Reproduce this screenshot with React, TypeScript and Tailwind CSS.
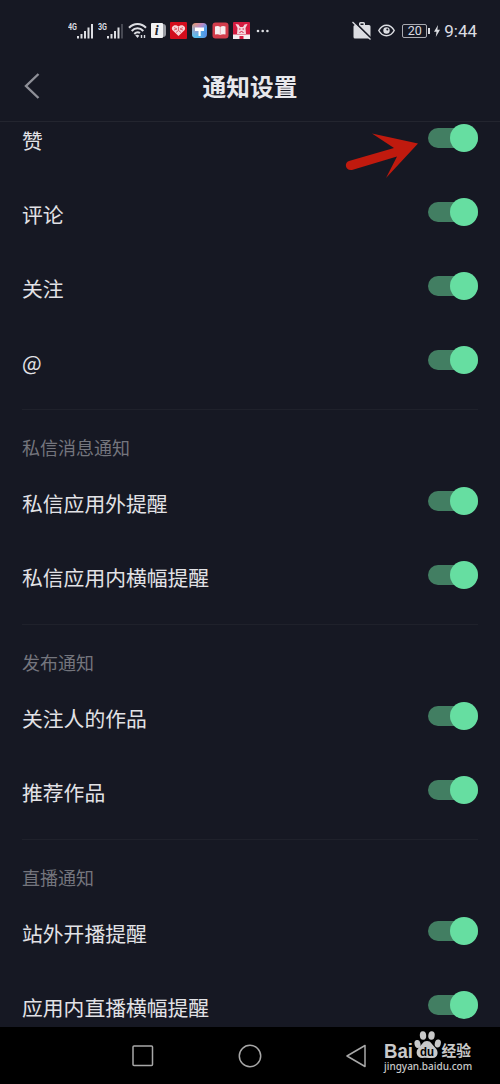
type Section = {
  title?: string;
  items: string[];
};

const sections: Section[] = [
  { items: ['赞', '评论', '关注', '@'] },
  { title: '私信消息通知', items: ['私信应用外提醒', '私信应用内横幅提醒'] },
  { title: '发布通知', items: ['关注人的作品', '推荐作品'] },
  { title: '直播通知', items: ['站外开播提醒', '应用内直播横幅提醒'] },
];

function Signal({ label, weak = false }: { label: string; weak?: boolean }) {
  return (
    <svg width="26" height="18" viewBox="0 0 26 18" fill="#dcdde2">
      <text x="0" y="8" fontSize="9.5" fontWeight="700" textLength="9" lengthAdjust="spacingAndGlyphs" fontFamily="Roboto, sans-serif">
        {label}
      </text>
      <rect x="9" y="14" width="2" height="2.5" />
      <rect x="12.5" y="12" width="2" height="4.5" />
      <rect x="16" y="9" width="2" height="7.5" />
      <rect x="19.5" y="5.5" width="2" height="11" />
      <rect x="23" y="2" width="2" height="14.5" opacity={weak ? 0.25 : 1} />
    </svg>
  );
}

function Wifi() {
  return (
    <svg width="19" height="17" viewBox="0 0 19 17" fill="none" stroke="#dcdde2" strokeWidth="2">
      <path d="M1 5.8C5.8.7 13.2.7 18 5.8" />
      <path d="M3.7 9C7.1 5.4 11.9 5.4 15.3 9" />
      <path d="M6.3 12C8.2 10 10.4 9.9 12 11" />
      <path d="M7.2 13.3 9.5 16l1.9-2.2c-1.2-1.2-2.9-1.3-4.2-.5Z" fill="#dcdde2" stroke="none" />
      <path d="M13.5 13v3M16.5 13v3" strokeWidth="1.4" />
    </svg>
  );
}

function NotificationIcons() {
  return (
    <div className="flex items-center gap-[4px]">
      <svg width="15" height="17" viewBox="0 0 15 17">
        <path d="M11 2h1a3 3 0 0 1 3 3v7a3 3 0 0 1-3 3h-1Z" fill="#999ba2" />
        <rect y="1" width="12" height="15" rx="1" fill="#f1f1f3" />
        <text x="3.7" y="13" fontSize="14" fontWeight="700" fontStyle="italic" fill="#22232b" fontFamily="Liberation Serif, serif">
          i
        </text>
      </svg>
      <svg width="17" height="17" viewBox="0 0 17 17">
        <rect width="17" height="17" rx="1" fill="#d30d1c" />
        <path d="M8.5 14 2.3 8C.5 4.8 4.7 1.3 8.5 4.6 12.3 1.3 16.5 4.8 14.7 8Z" fill="#f7d3d6" />
        <path d="m4 5.5 3 1.5-3 1m9-2.5L10 7l3 1M6 10.5l2.5-2 2.5 2M8.5 5v3.5" fill="none" stroke="#d84a56" strokeWidth=".8" />
      </svg>
      <svg width="17" height="17" viewBox="0 0 17 17">
        <defs>
          <linearGradient id="brush" x1="0" y1="0" x2="1" y2="1">
            <stop offset=".05" stopColor="#f3966a" />
            <stop offset=".4" stopColor="#b58ac9" />
            <stop offset=".65" stopColor="#4fa0ea" />
            <stop offset="1" stopColor="#5b7fe0" />
          </linearGradient>
          <linearGradient id="brushCorner" x1="0" y1="1" x2=".6" y2=".4">
            <stop stopColor="#56c8ee" />
            <stop offset="1" stopColor="#56c8ee" stopOpacity="0" />
          </linearGradient>
        </defs>
        <rect x="1" y="1" width="15" height="15" rx="4" fill="url(#brush)" />
        <rect x="1" y="1" width="15" height="15" rx="4" fill="url(#brushCorner)" />
        <path d="M4 5.5h9V9H9.7v5H7.5V9H4Z" fill="#fff" />
      </svg>
      <svg width="17" height="17" viewBox="0 0 17 17">
        <rect x=".5" y=".5" width="16" height="16" rx="3" fill="#d23c4b" />
        <path d="M3 4.5q3-1 5.3.4 2.2-1.4 5.2-.4v8q-3-.8-5.2.4Q6 11.7 3 12.5Z" fill="#f7eef0" />
        <path d="M8.3 5v7.5" stroke="#e08a93" strokeWidth=".6" />
      </svg>
      <svg width="17" height="17" viewBox="0 0 17 17">
        <rect width="17" height="17" rx="1" fill="#d41c40" />
        <path d="m2.5 2 3 .5L7 5h3l1.5-2.5 3-.5-2 4 .5 6H4l.5-6Z" fill="#f5d5dc" />
        <path d="M6 7h1.5M9.500 7H11M6.500 11l2-2 2 2" fill="none" stroke="#d41c40" />
        <path d="M0 12.500h17V17H0Z" fill="#f5edf0" />
        <path d="M6.500 17v-3h4v3Z" fill="#d41c40" />
      </svg>
    </div>
  );
}

function StatusBar() {
  return (
    <div className="flex h-[61px] items-center pr-[23px] pl-[68px]">
      <div className="flex items-center gap-[4px]">
        <Signal label="4G" />
        <Signal label="3G" weak />
        <Wifi />
        <NotificationIcons />
        <svg width="14" height="4" viewBox="0 0 14 4" fill="#dcdde2" className="ml-[2px]">
          <circle cx="2" cy="2" r="1.3" />
          <circle cx="6.7" cy="2" r="1.3" />
          <circle cx="11.4" cy="2" r="1.3" />
        </svg>
      </div>
      <div className="ml-auto flex items-center">
        <svg width="20" height="19" viewBox="0 0 20 19">
          <path d="M7 4V2.5Q7 1 8.5 1h3Q13 1 13 2.5V4h4q1.5 0 1.5 1.5V16q0 1.5-1.5 1.5H3Q1.5 17.5 1.5 16V5.5Q1.500 4 3 4Zm1.500 0h3V2.500h-3Z" fill="#dcdde2" fillRule="evenodd" />
          <path d="m1.5 0 18 18" stroke="#161823" strokeWidth="2" />
          <path d="m.5 1 18 17.5" stroke="#dcdde2" strokeWidth="1.3" />
        </svg>
        <svg width="17" height="13" viewBox="0 0 17 13" fill="none" stroke="#dcdde2" strokeWidth="1.5" className="ml-[6px]">
          <path d="M.8 6.5C4.6-.6 12.4-.6 16.2 6.5 12.4 13.6 4.6 13.6.8 6.5Z" />
          <circle cx="8.5" cy="6.5" r="3.2" fill="#dcdde2" stroke="none" />
          <circle cx="9.3" cy="5.6" r="1" fill="#161823" stroke="none" />
        </svg>
        <div className="ml-[7px] flex h-[14px] w-[25px] items-center justify-center rounded-[2px] border border-[#a9aab1] pt-px text-[12.5px] leading-none text-[#dcdde2]">
          20
        </div>
        <div className="ml-[1px] h-[6px] w-[2px] bg-[#dcdde2]" />
        <svg width="6" height="12" viewBox="0 0 6 12" fill="#dcdde2" className="ml-[4px]">
          <path d="M4 0 0 6.8h2.5L1.8 12 6 4.8H3.4Z" />
        </svg>
        <span className="ml-[4px] pt-px text-[17px] leading-none text-[#dcdde2]">9:44</span>
      </div>
    </div>
  );
}

function Toggle() {
  return (
    <div className="flex h-7 w-[50px] items-center">
      <div className="flex h-5 w-full items-center justify-end rounded-full bg-[#427e62]">
        <div className="size-7 shrink-0 rounded-full bg-[#66dea1]" />
      </div>
    </div>
  );
}

function SettingsSection({ title, items }: Section) {
  return (
    <section>
      {title && (
        <div className="mt-3 h-[55px] border-t border-[#1f212b] pt-[24px]">
          <h2 className="text-[18px] leading-[26px] text-[#74757d]">{title}</h2>
        </div>
      )}
      {items.map((item) => (
        <div key={item} className="flex h-[74px] items-center justify-between">
          <span className="pt-[3px] text-[20.8px] leading-[30px] text-[#e2e2e6]">{item}</span>
          <Toggle />
        </div>
      ))}
    </section>
  );
}

function Watermark() {
  return (
    <div className="absolute top-[3px] left-[384px] w-[90px] text-[#c9c9c9]">
      <svg width="90" height="30" viewBox="0 0 90 30" fill="currentColor" className="overflow-visible">
        <text x="0" y="27.5" fontSize="19.5" fontWeight="700" textLength="29" lengthAdjust="spacingAndGlyphs" fontFamily="Liberation Sans, sans-serif">
          Bai
        </text>
        <ellipse cx="33.5" cy="14" rx="3" ry="4" transform="rotate(-12 33.5 14)" />
        <ellipse cx="39" cy="5.5" rx="3.2" ry="4.3" transform="rotate(-4 39 5.5)" />
        <ellipse cx="47.5" cy="5.5" rx="3.2" ry="4.3" transform="rotate(8 47.5 5.5)" />
        <ellipse cx="53.8" cy="13.5" rx="3" ry="4" transform="rotate(14 53.8 13.5)" />
        <path d="M43 11c4 0 5 3.5 8 6.5 4 3.5 3.5 10.5-2.5 10.5-3 0-7-.6-10 0-6.5 0-7.5-7-3.5-10.5 3-3 4-6.5 8-6.5Z" />
        <text x="36" y="25.5" fontSize="12" fontWeight="700" fill="#000" textLength="14" lengthAdjust="spacingAndGlyphs" fontFamily="Liberation Sans, sans-serif">
          du
        </text>
        <text x="57.5" y="26.3" fontSize="15" fontWeight="700" textLength="29.5" lengthAdjust="spacingAndGlyphs" fontFamily="Noto Sans CJK SC, sans-serif">
          经验
        </text>
      </svg>
      <p className="font-['Noto_Sans',sans-serif] text-[10px] leading-[12px] font-medium whitespace-nowrap">jingyan.baidu.com</p>
    </div>
  );
}

function NavBar() {
  return (
    <nav className="relative h-[57px] bg-black">
      <div className="flex h-full items-center justify-between pr-[133px] pl-[132px]">
        <svg width="22" height="22" viewBox="0 0 22 22" fill="none" stroke="#a8a8a8" strokeWidth="1.5">
          <rect x="1" y="1" width="19.5" height="19.5" rx="1" />
        </svg>
        <svg width="24" height="24" viewBox="0 0 24 24" fill="none" stroke="#a8a8a8" strokeWidth="1.5">
          <circle cx="12" cy="12" r="10.7" />
        </svg>
        <svg width="21" height="24" viewBox="0 0 21 24" fill="none" stroke="#a8a8a8" strokeWidth="1.5" strokeLinejoin="round">
          <path d="M19 1.5v21L1 12Z" />
        </svg>
      </div>
      <Watermark />
    </nav>
  );
}

export default function App() {
  return (
    <div className="relative flex h-[1084px] w-[500px] flex-col overflow-hidden bg-[#161823] font-['Roboto','Noto_Sans_CJK_SC',sans-serif]">
      <StatusBar />
      <header className="grid h-[61px] shrink-0 grid-cols-[60px_1fr_60px] items-center border-b border-[#23252f]">
        <svg width="16" height="26" viewBox="0 0 16 26" fill="none" stroke="#8e8f97" strokeWidth="2.4" className="ml-[24px] -mt-[10px]">
          <path d="M14.5 1 2 13l12.5 12" />
        </svg>
        <h1 className="-mt-[7px] text-center text-[23.7px] leading-[34px] font-bold text-[#e8e8ec]">通知设置</h1>
      </header>
      <main className="min-h-0 flex-1 overflow-hidden px-[22px] font-['Noto_Sans_CJK_SC',sans-serif]">
        <div className="-mt-[21px]">
          {sections.map((section) => (
            <SettingsSection key={section.items[0]} {...section} />
          ))}
        </div>
      </main>
      <NavBar />
      <svg width="76" height="48" viewBox="0 0 76 48" fill="#c01a0e" className="absolute top-[132px] left-[344px]">
        <path d="M5 29 50 16 28 1.5 74 11.5 42 46 53 24.5 8 38C1 39 0 30.5 5 29Z" />
      </svg>
    </div>
  );
}
